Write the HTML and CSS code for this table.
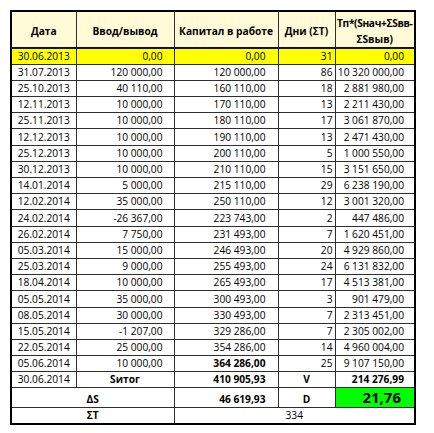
FILE: index.html
```html
<!DOCTYPE html>
<html lang="ru">
<head>
<meta charset="utf-8">
<title>Расчёт доходности</title>
<link rel="stylesheet" href="styles.css">
</head>
<body>
<table class="sheet">
  <colgroup>
    <col class="c-date"><col class="c-flow"><col class="c-cap"><col class="c-days"><col class="c-prod">
  </colgroup>
  <thead>
    <tr class="head">
      <th>Дата</th>
      <th>Ввод/вывод</th>
      <th>Капитал в работе</th>
      <th>Дни (ΣT)</th>
      <th class="h-prod"><span class="l1">Тп*(Sнач+ΣSвв-</span><br>ΣSвыв)</th>
    </tr>
  </thead>
  <tbody>
    <tr class="start"><td class="date">30.06.2013</td><td class="flow">0,00</td><td class="cap">0,00</td><td class="days">31</td><td class="prod">0,00</td></tr>
    <tr><td class="date">31.07.2013</td><td class="flow">120 000,00</td><td class="cap">120 000,00</td><td class="days">86</td><td class="prod">10 320 000,00</td></tr>
    <tr><td class="date">25.10.2013</td><td class="flow">40 110,00</td><td class="cap">160 110,00</td><td class="days">18</td><td class="prod">2 881 980,00</td></tr>
    <tr><td class="date">12.11.2013</td><td class="flow">10 000,00</td><td class="cap">170 110,00</td><td class="days">13</td><td class="prod">2 211 430,00</td></tr>
    <tr><td class="date">25.11.2013</td><td class="flow">10 000,00</td><td class="cap">180 110,00</td><td class="days">17</td><td class="prod">3 061 870,00</td></tr>
    <tr><td class="date">12.12.2013</td><td class="flow">10 000,00</td><td class="cap">190 110,00</td><td class="days">13</td><td class="prod">2 471 430,00</td></tr>
    <tr><td class="date">25.12.2013</td><td class="flow">10 000,00</td><td class="cap">200 110,00</td><td class="days">5</td><td class="prod">1 000 550,00</td></tr>
    <tr><td class="date">30.12.2013</td><td class="flow">10 000,00</td><td class="cap">210 110,00</td><td class="days">15</td><td class="prod">3 151 650,00</td></tr>
    <tr><td class="date">14.01.2014</td><td class="flow">5 000,00</td><td class="cap">215 110,00</td><td class="days">29</td><td class="prod">6 238 190,00</td></tr>
    <tr><td class="date">12.02.2014</td><td class="flow">35 000,00</td><td class="cap">250 110,00</td><td class="days">12</td><td class="prod">3 001 320,00</td></tr>
    <tr><td class="date">24.02.2014</td><td class="flow">-26 367,00</td><td class="cap">223 743,00</td><td class="days">2</td><td class="prod">447 486,00</td></tr>
    <tr><td class="date">26.02.2014</td><td class="flow">7 750,00</td><td class="cap">231 493,00</td><td class="days">7</td><td class="prod">1 620 451,00</td></tr>
    <tr><td class="date">05.03.2014</td><td class="flow">15 000,00</td><td class="cap">246 493,00</td><td class="days">20</td><td class="prod">4 929 860,00</td></tr>
    <tr><td class="date">25.03.2014</td><td class="flow">9 000,00</td><td class="cap">255 493,00</td><td class="days">24</td><td class="prod">6 131 832,00</td></tr>
    <tr><td class="date">18.04.2014</td><td class="flow">10 000,00</td><td class="cap">265 493,00</td><td class="days">17</td><td class="prod">4 513 381,00</td></tr>
    <tr><td class="date">05.05.2014</td><td class="flow">35 000,00</td><td class="cap">300 493,00</td><td class="days">3</td><td class="prod">901 479,00</td></tr>
    <tr><td class="date">08.05.2014</td><td class="flow">30 000,00</td><td class="cap">330 493,00</td><td class="days">7</td><td class="prod">2 313 451,00</td></tr>
    <tr><td class="date">15.05.2014</td><td class="flow">-1 207,00</td><td class="cap">329 286,00</td><td class="days">7</td><td class="prod">2 305 002,00</td></tr>
    <tr><td class="date">22.05.2014</td><td class="flow">25 000,00</td><td class="cap">354 286,00</td><td class="days">14</td><td class="prod">4 960 004,00</td></tr>
    <tr><td class="date">05.06.2014</td><td class="flow">10 000,00</td><td class="cap strong">364 286,00</td><td class="days">25</td><td class="prod">9 107 150,00</td></tr>
    <tr><td class="date">30.06.2014</td><td class="label">Sитог</td><td class="cap strong">410 905,93</td><td class="label">V</td><td class="prod strong">214 276,99</td></tr>
    <tr class="delta"><td class="label" colspan="2">ΔS</td><td class="cap strong">46 619,93</td><td class="label">D</td><td class="result">21,76</td></tr>
    <tr class="sum"><td class="label" colspan="2">ΣT</td><td class="total" colspan="3">334</td></tr>
  </tbody>
</table>
</body>
</html>
```

FILE: styles.css
```css
html, body {
  margin: 0;
  padding: 0;
  background: #ffffff;
}

body {
  font-family: "Open Sans", "DejaVu Sans", sans-serif;
  font-size: 10.2px;
  color: #000000;
}

.sheet {
  border-collapse: collapse;
  table-layout: fixed;
  width: 406px;
  margin: 10px 0 0 10px;
  border: 2px solid #000000;
}

.c-date { width: 65px; }
.c-flow { width: 98px; }
.c-cap  { width: 104px; }
.c-days { width: 57px; }
.c-prod { width: 80px; }

.sheet th,
.sheet td {
  border: 1px solid #2e2e2e;
  padding: 0;
  white-space: nowrap;
  line-height: 13px;
  overflow: visible;
}

.sheet td {
  vertical-align: bottom;
  padding-bottom: 1px;
}

.head {
  height: 30px;
  background: #fffbd9;
}

.head th {
  font-weight: 700;
  text-align: center;
  vertical-align: middle;
  padding-top: 3px;
  border-bottom: 2px solid #111111;
  line-height: 16px;
}

.h-prod {
  overflow: hidden;
}

.h-prod .l1 {
  letter-spacing: -0.35px;
}

.sheet tbody tr {
  height: 16.2px;
}

.start {
  background: #ffff00;
}

.date {
  text-align: center;
}

.flow {
  text-align: right;
  padding-right: 11px !important;
}

.cap {
  text-align: right;
  padding-right: 12px !important;
}

.days {
  text-align: right;
  padding-right: 2px !important;
}

.prod {
  text-align: right;
  padding-right: 10px !important;
}

.strong {
  font-weight: 700;
}

.label {
  text-align: center;
  font-weight: 700;
}

.sheet tr.delta {
  height: 20px;
}

.result {
  background: #00ff00;
  font-weight: 700;
  font-size: 15px;
  text-align: right;
  padding-right: 13px !important;
  line-height: 18px !important;
}

.total {
  text-align: center;
}
```
